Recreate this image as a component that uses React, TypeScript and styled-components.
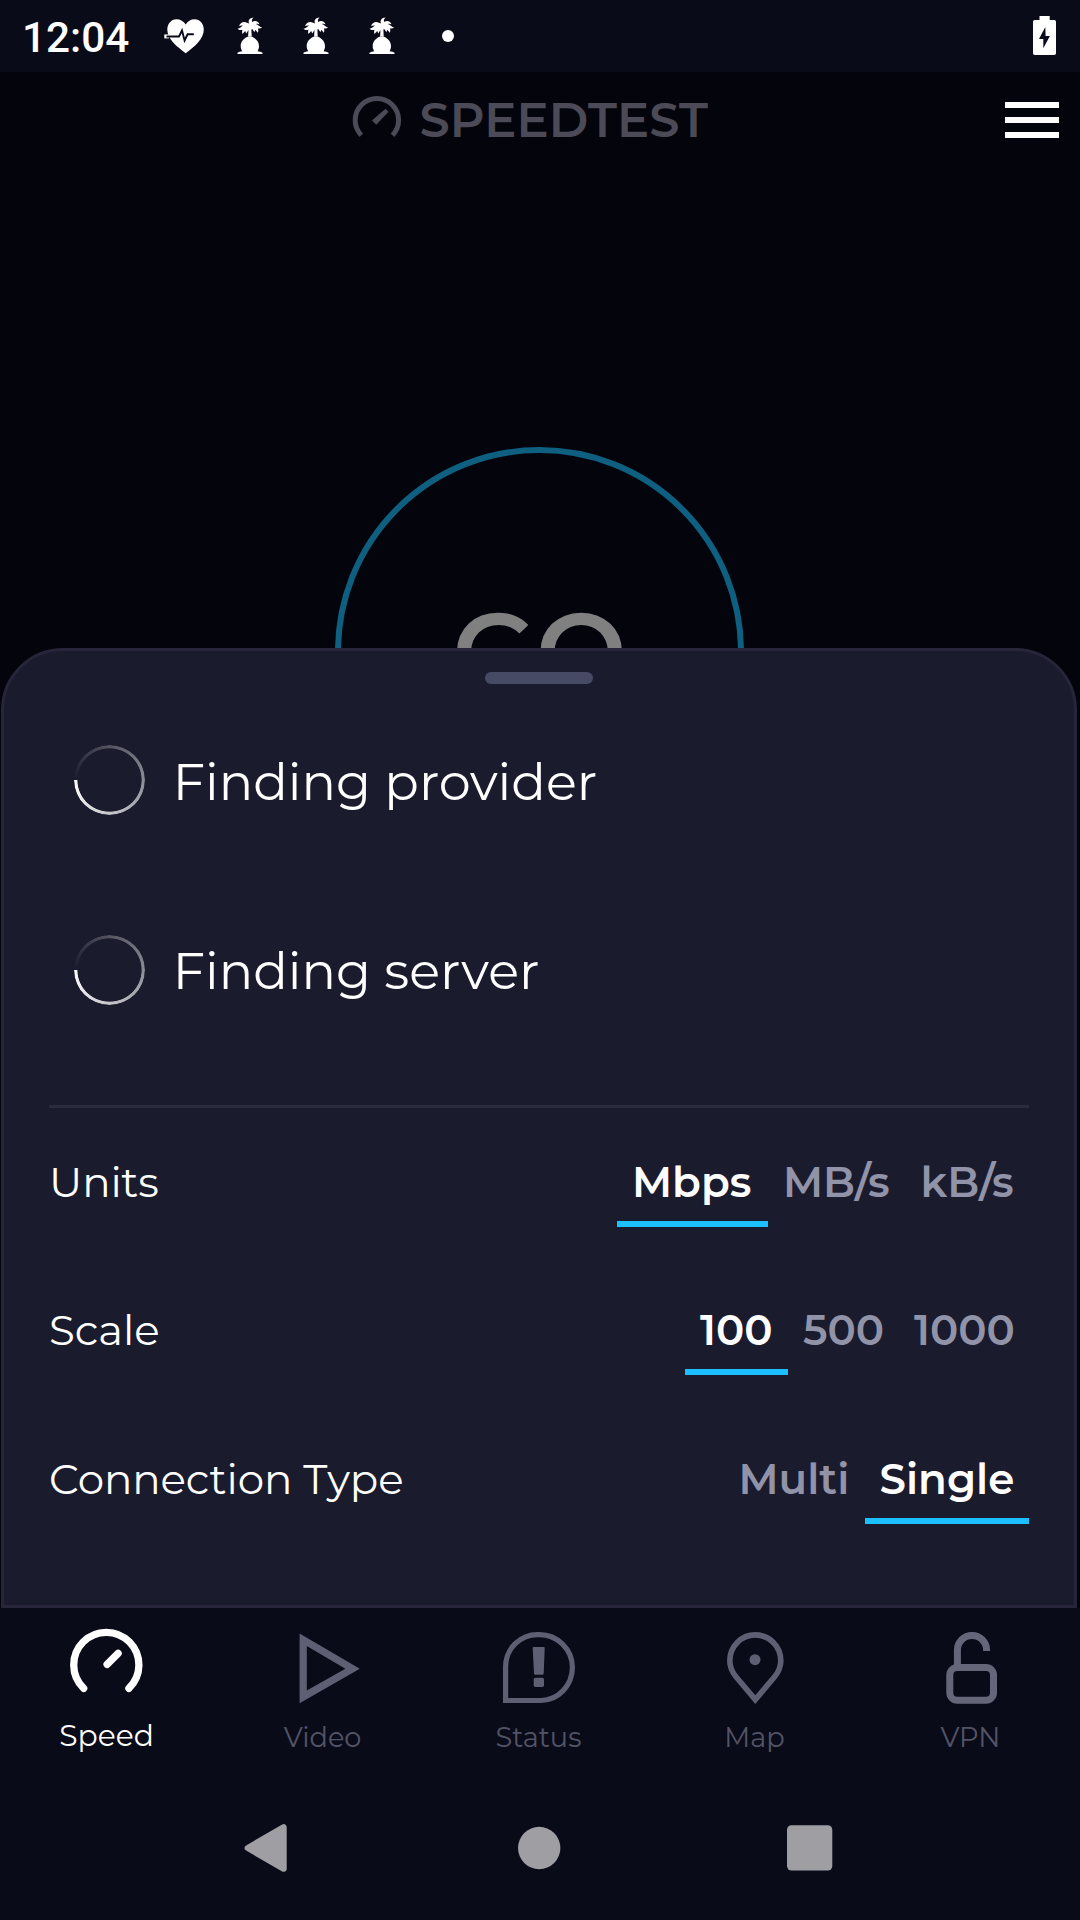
import React from 'react';
import styled, { createGlobalStyle } from 'styled-components';

const color = {
  bar: '#0a0b19',
  stage: '#04040c',
  sheet: '#1b1b2e',
  sheetBorder: '#26253a',
  divider: '#2b2b40',
  handle: '#474a64',
  accent: '#1cbfff',
  ring: '#0e5f80',
  muted: '#9193a8',
  icon: '#5f5f74',
  label: '#535366',
  logo: '#4b4a56',
  system: '#9e9ea3',
};

const GlobalStyle = createGlobalStyle`
  *, *::before, *::after { box-sizing: border-box; }
  body { margin: 0; background: ${color.bar}; }
  svg { display: block; flex: none; }
`;

const Screen = styled.div`
  width: 1080px;
  height: 1920px;
  overflow: hidden;
  display: flex;
  flex-direction: column;
  background: ${color.stage};
  color: #fff;
  font-family: Montserrat, Inter, 'Liberation Sans', sans-serif;
  font-weight: 400;
  white-space: nowrap;
`;

const StatusBar = styled.header`
  flex: none;
  height: 72px;
  padding: 0 24px 0 22px;
  display: flex;
  align-items: center;
  background: ${color.bar};
`;

const Clock = styled.time`
  width: 140px;
  padding-top: 3px;
  font: 500 42.3px/50px Roboto, sans-serif;
`;

const Notifications = styled.div`
  display: flex;
  align-items: center;
`;

const PalmGroup = styled.div`
  display: flex;
  gap: 34px;
  margin-left: 28px;
`;

const MoreDot = styled.span`
  width: 12px;
  height: 12px;
  margin-left: 44px;
  border-radius: 50%;
  background: #fff;
`;

const BatterySlot = styled.div`
  margin: -1px 0 0 auto;
`;

const TitleBar = styled.div`
  flex: none;
  height: 96px;
  padding: 0 21px 0 350px;
  display: flex;
  align-items: center;
`;

const Brand = styled.h1`
  margin: 0 0 0 15.5px;
  color: ${color.logo};
  font-size: 48px;
  font-weight: 600;
  letter-spacing: 0.1px;
  line-height: 60px;
`;

const MenuButton = styled.button`
  width: 54px;
  height: 36px;
  margin-left: auto;
  padding: 0;
  border: 0;
  background: none;
  display: flex;
  flex-direction: column;
  justify-content: space-between;
`;

const MenuLine = styled.span`
  height: 6px;
  background: #fff;
`;

const Stage = styled.main`
  flex: none;
  height: 480px;
  padding: 279px 1px 0 0;
  display: flex;
  justify-content: center;
  align-items: flex-start;
  overflow: hidden;
`;

const GoRing = styled.div`
  flex: none;
  width: 409px;
  height: 409px;
  padding-bottom: 4px;
  display: flex;
  align-items: center;
  justify-content: center;
  border: 6px solid ${color.ring};
  border-radius: 50%;
  color: #808080;
  font-size: 108px;
  font-weight: 600;
  line-height: 120px;
`;

const Sheet = styled.section`
  flex: none;
  width: 1076px;
  height: 960px;
  margin-left: 1px;
  padding: 21px 45px 0;
  display: flex;
  flex-direction: column;
  border: 3px solid ${color.sheetBorder};
  border-radius: 62px 62px 0 0;
  background: ${color.sheet};
`;

const Handle = styled.div`
  flex: none;
  align-self: center;
  width: 108px;
  height: 12px;
  border-radius: 6px;
  background: ${color.handle};
`;

const Lookups = styled.div`
  flex: none;
  margin-top: 61px;
  padding: 0 25px 100px;
  display: flex;
  flex-direction: column;
  gap: 120px;
  border-bottom: 3px solid ${color.divider};
`;

const LookupText = styled.div`
  padding-top: 4px;
`;

const Lookup = styled.div`
  height: 70px;
  display: flex;
  align-items: center;
  gap: 27.800px;
  font-size: 51px;
  line-height: 60px;

  &:last-child ${LookupText} {
    padding-top: 2px;
  }
`;

const Spinner = styled.div`
  width: 71px;
  height: 70px;
  border-radius: 50%;
  background: conic-gradient(from 270deg, rgba(255, 255, 255, 0), #fff);
  mask: radial-gradient(closest-side, transparent calc(100% - 3.8px), #000 calc(100% - 3px));
`;

const Settings = styled.div`
  margin-top: 29px;
  display: flex;
  flex-direction: column;
  gap: 58.4px;
`;

const Setting = styled.div`
  height: 90px;
  display: flex;
  align-items: center;
  justify-content: space-between;
  font-size: 42px;
  line-height: 50px;
`;

const SettingLabel = styled.span`
  letter-spacing: -0.1px;
`;

const Options = styled.div`
  display: flex;
`;

const Option = styled.button<{ $active?: boolean; $width: number }>`
  width: ${(p) => p.$width}px;
  height: 90px;
  padding: 0 0 0 15px;
  border: 0;
  background: none;
  box-shadow: ${(p) => (p.$active ? `inset 0 -6px ${color.accent}` : 'none')};
  color: ${(p) => (p.$active ? '#fff' : color.muted)};
  font: inherit;
  font-weight: 600;
  text-align: left;
`;

const TabBar = styled.nav`
  flex: none;
  height: 180px;
  margin-left: -2px;
  padding-top: 20px;
  display: flex;
  background: ${color.bar};
  box-shadow: 2px 0 ${color.bar};
`;

const Tab = styled.a<{ $active?: boolean }>`
  width: 216px;
  display: flex;
  flex-direction: column;
  align-items: center;
  gap: ${(p) => (p.$active ? 7 : 10)}px;
  color: ${(p) => (p.$active ? '#fff' : color.icon)};
`;

const TabLabel = styled.span<{ $active?: boolean }>`
  padding-left: 1px;
  color: ${(p) => (p.$active ? '#fff' : color.label)};
  font-size: ${(p) => (p.$active ? 29.8 : 27.2)}px;
  line-height: 40px;
`;

const SystemNav = styled.footer`
  flex: 1;
  padding: 30px 0 0 236px;
  display: flex;
  align-items: flex-start;
  gap: 212px;
  background: ${color.bar};
`;

const HeartIcon = () => (
  <svg width="44" height="44" viewBox="0 0 44 44">
    <path
      fill="#fff"
      d="M23.7 39.2C15 33 5.3 25 5.3 15.6 5.3 9.6 9.3 5.2 14.4 5.2c4 0 7.3 2 9.3 5.4 2-3.4 5-5.4 9-5.4 5.2 0 9.1 4.4 9.1 10.4C41.8 25 32.5 33 23.7 39.2Z"
    />
    <path fill="none" stroke="#fff" strokeWidth="4" d="M2.300 22.400H7" />
    <path fill="none" stroke={color.bar} strokeWidth="1.9" d="M4.500 22.500H17l3-6 2.600 10 3-6.200h6.200" />
  </svg>
);

const PalmIcon = () => (
  <svg width="32" height="44" viewBox="0 0 32 44" fill="#fff">
    <path d="M15.200 9.500C13.500 6.500 15.500 3.600 19.600 3.400c-1.800 1.500-2 3.200-1.400 4.700 2.300-1.900 5.800-1.400 7.300 2.200-1.500-.7-2.700-.7-3.700-.3 2.700.8 4.200 3.200 6.300 3.600-1.400 1-3 1-4.300.6.7 1.500.7 2.900 0 4.600-1-1.600-1.900-2.300-2.700-2.700l-.6 2.200-2.300-3.200-.8.3.3 7.300h-3.600l.4-6.600-2.300 3.400-1-2.600-2.700 3c-.6-1.600-.5-3 0-4.200-2 .8-3.600.4-5-1 2.400-.3 3.700-2 5.400-3.200-1.600-.3-2.700 0-3.800.8.7-3.400 4.600-5.600 7.900-3.500Z" />
    <path d="M13.400 22.700h4.800c4 1.900 6.800 5.200 6.800 9.400 0 2-.6 3.700-1.400 5.200 2 .3 3.800.8 4.900 1.500v1.200h-25v-1.200c1.200-.8 2.900-1.200 4.700-1.500-1-1.500-1.500-3.200-1.500-5.200 0-4.200 2.700-7.500 6.700-9.400Z" />
  </svg>
);

const BatteryIcon = () => (
  <svg width="23" height="39" viewBox="0 0 23 39">
    <path
      fill="#fff"
      fillRule="evenodd"
      d="M6.500 0h10.200v4h4.500Q23 4 23 5.800v31.400Q23 39 21.200 39H1.800Q0 39 0 37.200V5.800Q0 4 1.800 4h4.700ZM12.300 11 6 23h4.300v9.200L16.900 20h-4.300Z"
    />
  </svg>
);

const LogoIcon = () => (
  <svg width="54" height="54" viewBox="0 0 54 54">
    <path fill="none" stroke={color.logo} strokeWidth="5" d="M11.300 42.200a21.700 21.700 0 1 1 31.200 0" />
    <path fill={color.logo} d="m35.500 15.700 3 3-12.200 13-4.300-4.200Z" />
  </svg>
);

const SpeedIcon = () => (
  <svg width="80" height="80" viewBox="0 0 80 80" fill="none" stroke="currentColor" strokeWidth="7.3" strokeLinecap="round">
    <path d="M17.700 60.400a32.600 32.600 0 1 1 45.200 0M41.100 36.300l11-11" />
  </svg>
);

const VideoIcon = () => (
  <svg width="80" height="80" viewBox="0 0 80 80" fill="currentColor">
    <path fillRule="evenodd" d="m17.600 5.500 60.200 35.200L17.600 75.200ZM24.800 18v44.600l38.600-21.900Z" />
  </svg>
);

const StatusIcon = () => (
  <svg width="80" height="80" viewBox="0 0 80 80" fill="currentColor">
    <path
      fill="none"
      stroke="currentColor"
      strokeWidth="5.2"
      d="M7.600 72.500V38.500A32 32 0 0 1 41 6.600a33 33 0 0 1 33.400 33A32 33 0 0 1 43 72.500Z"
    />
    <path d="M35.700 19h10q1.100 0 1 1.100l-1 25.500q0 1.100-1.100 1.100h-7.500q-1.100 0-1.100-1.100l-1.300-25.500q0-1.100 1-1.100Z" />
    <rect x="35.7" y="49.7" width="10.3" height="9.3" rx="1.8" />
  </svg>
);

const MapIcon = () => (
  <svg width="80" height="80" viewBox="0 0 80 80">
    <path
      fill="none"
      stroke="currentColor"
      strokeWidth="5.6"
      d="M41.300 71.600 22 48.800c-4-4.900-6.200-9.600-6.200-16.100a25.500 25.800 0 0 1 51 0c0 6.500-2.200 11.200-6.200 16.100Z"
    />
    <circle cx="41" cy="31.7" r="5.5" fill="currentColor" />
  </svg>
);

const VpnIcon = () => (
  <svg width="80" height="80" viewBox="0 0 80 80" fill="none" stroke="#66667a" strokeWidth="7">
    <rect x="19.8" y="39.5" width="43.7" height="32.7" rx="7.5" />
    <path d="M27.400 38V22.100a14.600 14.600 0 0 1 29.200 0V23" />
  </svg>
);

const BackIcon = () => (
  <svg width="60" height="60" viewBox="0 0 60 60">
    <path
      fill={color.system}
      stroke={color.system}
      strokeWidth="6"
      strokeLinejoin="round"
      d="M11.600 30 47.700 9.200v41.600Z"
    />
  </svg>
);

const HomeIcon = () => (
  <svg width="60" height="60" viewBox="0 0 60 60">
    <circle cx="31.2" cy="30" r="21.2" fill={color.system} />
  </svg>
);

const RecentsIcon = () => (
  <svg width="60" height="60" viewBox="0 0 60 60">
    <rect x="7" y="7.3" width="45.3" height="45.3" rx="4.5" fill={color.system} />
  </svg>
);

type OptionData = { text: string; width: number; active?: boolean };

const settings: { label: string; options: OptionData[] }[] = [
  {
    label: 'Units',
    options: [
      { text: 'Mbps', width: 151, active: true },
      { text: 'MB/s', width: 137.5 },
      { text: 'kB/s', width: 123.5 },
    ],
  },
  {
    label: 'Scale',
    options: [
      { text: '100', width: 103, active: true },
      { text: '500', width: 111 },
      { text: '1000', width: 130 },
    ],
  },
  {
    label: 'Connection Type',
    options: [
      { text: 'Multi', width: 141 },
      { text: 'Single', width: 164.5, active: true },
    ],
  },
];

const tabs = [
  { label: 'Speed', Icon: SpeedIcon, active: true },
  { label: 'Video', Icon: VideoIcon },
  { label: 'Status', Icon: StatusIcon },
  { label: 'Map', Icon: MapIcon },
  { label: 'VPN', Icon: VpnIcon },
];

export default function App() {
  return (
    <>
      <GlobalStyle />
      <Screen>
        <StatusBar>
          <Clock>12:04</Clock>
          <Notifications>
            <HeartIcon />
            <PalmGroup>
              <PalmIcon />
              <PalmIcon />
              <PalmIcon />
            </PalmGroup>
            <MoreDot />
          </Notifications>
          <BatterySlot>
            <BatteryIcon />
          </BatterySlot>
        </StatusBar>

        <TitleBar>
          <LogoIcon />
          <Brand>SPEEDTEST</Brand>
          <MenuButton aria-label="Menu">
            <MenuLine />
            <MenuLine />
            <MenuLine />
          </MenuButton>
        </TitleBar>

        <Stage>
          <GoRing>GO</GoRing>
        </Stage>

        <Sheet>
          <Handle />
          <Lookups>
            <Lookup>
              <Spinner />
              <LookupText>Finding provider</LookupText>
            </Lookup>
            <Lookup>
              <Spinner />
              <LookupText>Finding server</LookupText>
            </Lookup>
          </Lookups>
          <Settings>
            {settings.map((s) => (
              <Setting key={s.label}>
                <SettingLabel>{s.label}</SettingLabel>
                <Options>
                  {s.options.map((o) => (
                    <Option key={o.text} $active={o.active} $width={o.width}>
                      {o.text}
                    </Option>
                  ))}
                </Options>
              </Setting>
            ))}
          </Settings>
        </Sheet>

        <TabBar>
          {tabs.map(({ label, Icon, active }) => (
            <Tab key={label} $active={active}>
              <Icon />
              <TabLabel $active={active}>{label}</TabLabel>
            </Tab>
          ))}
        </TabBar>

        <SystemNav>
          <BackIcon />
          <HomeIcon />
          <RecentsIcon />
        </SystemNav>
      </Screen>
    </>
  );
}
